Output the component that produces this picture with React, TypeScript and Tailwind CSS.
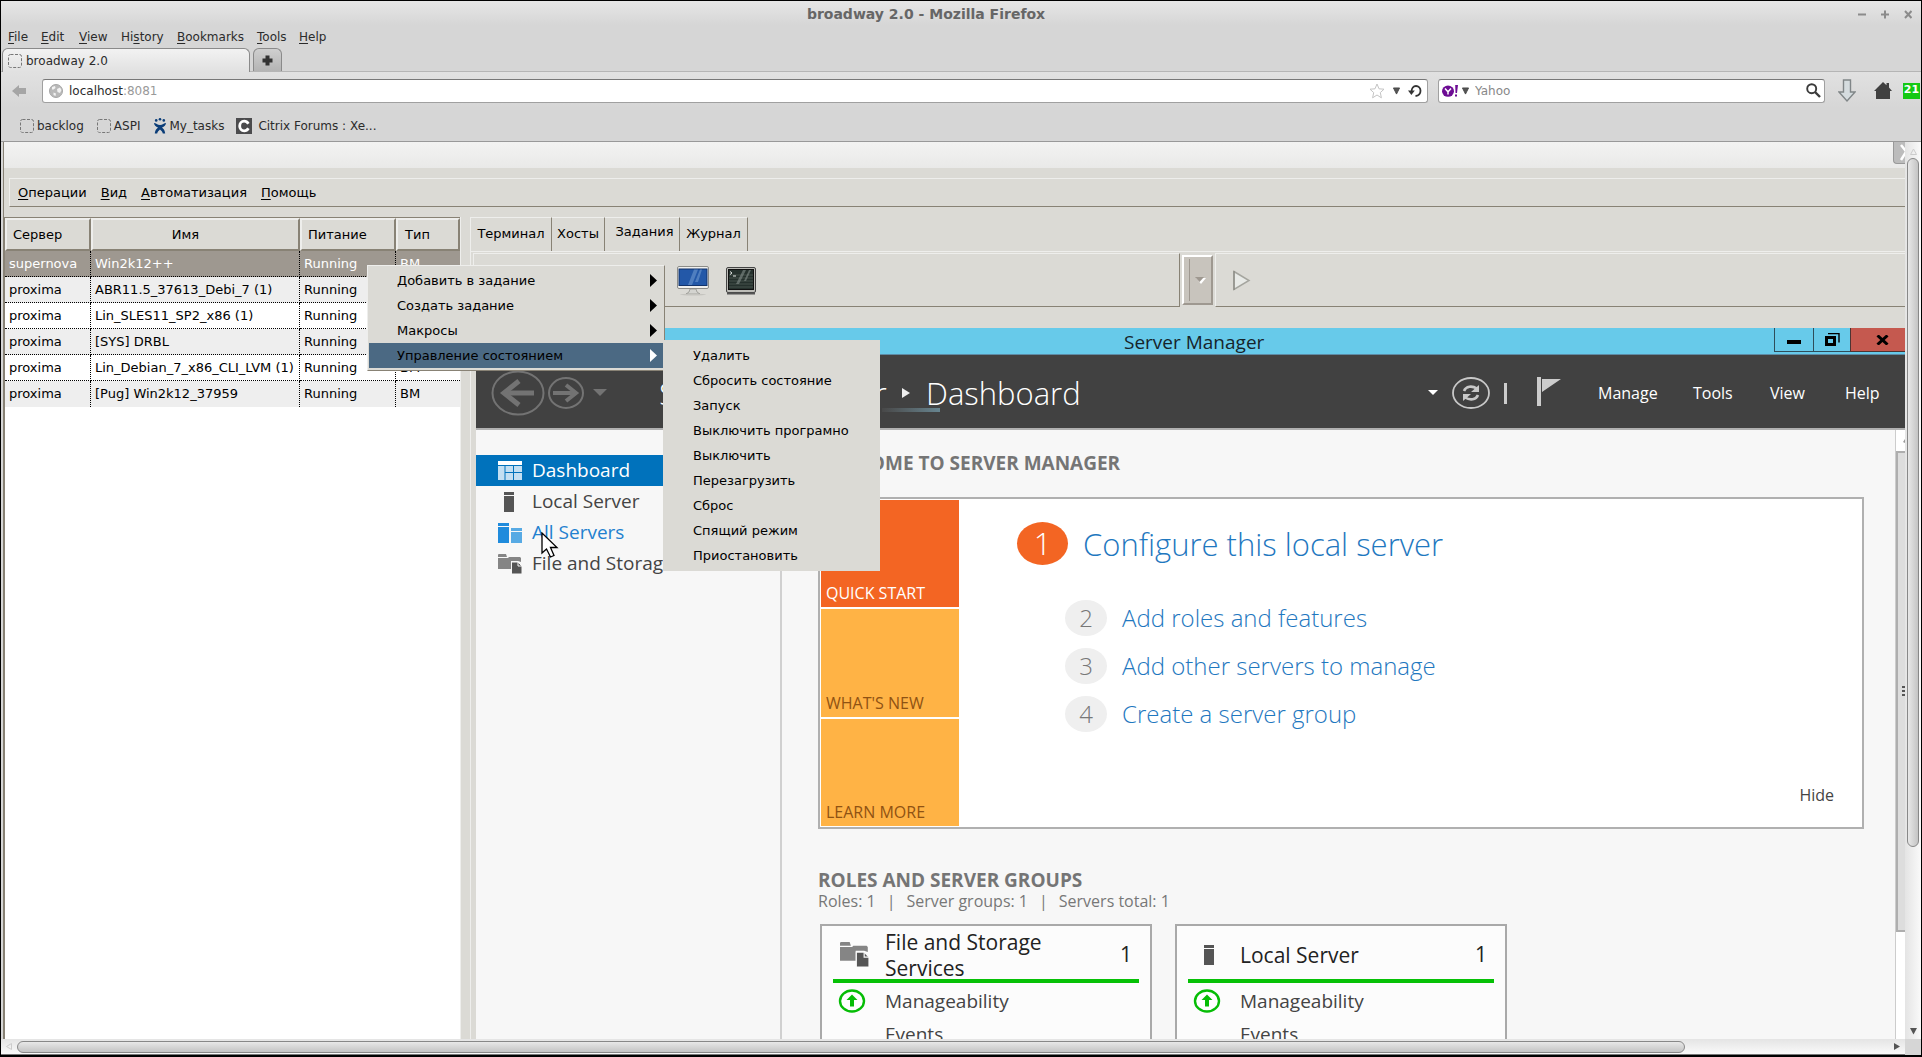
import type { ReactNode } from "react";

const gtkMenus = ["Операции", "Вид", "Автоматизация", "Помощь"];

const firefoxMenus: [string, string, string, string][] = [
  ["", "F", "ile", "w-[33px]"],
  ["", "E", "dit", "w-[38px]"],
  ["", "V", "iew", "w-[42px]"],
  ["Hi", "s", "tory", "w-[56px]"],
  ["", "B", "ookmarks", "w-[80px]"],
  ["", "T", "ools", "w-[42px]"],
  ["", "H", "elp", "w-[42px]"],
];

const machines = [
  ["supernova", "Win2k12++"],
  ["proxima", "ABR11.5_37613_Debi_7 (1)"],
  ["proxima", "Lin_SLES11_SP2_x86 (1)"],
  ["proxima", "[SYS] DRBL"],
  ["proxima", "Lin_Debian_7_x86_CLI_LVM (1)"],
  ["proxima", "[Pug] Win2k12_37959"],
];

const contextItems = ["Добавить в задание", "Создать задание", "Макросы", "Управление состоянием"];

const stateItems = [
  "Удалить",
  "Сбросить состояние",
  "Запуск",
  "Выключить програмно",
  "Выключить",
  "Перезагрузить",
  "Сброс",
  "Спящий режим",
  "Приостановить",
];

const steps: [number, string][] = [
  [2, "Add roles and features"],
  [3, "Add other servers to manage"],
  [4, "Create a server group"],
];

function BlankPageIcon() {
  return (
    <svg width="14" height="14" viewBox="0 0 14 14" aria-hidden="true">
      <rect x="0.5" y="0.5" width="13" height="13" rx="2" fill="none" stroke="#777" strokeDasharray="3 1.5" />
    </svg>
  );
}

function JiraIcon() {
  return (
    <svg width="14" height="16" viewBox="0 0 14 16" aria-hidden="true" fill="#0b3d78">
      <circle cx="3.2" cy="2.4" r="1.3" />
      <circle cx="7" cy="1.3" r="1.3" />
      <circle cx="10.8" cy="2.4" r="1.3" />
      <path d="M1 5C3 5 4.5 7 7 7S11 5 13 5C12.8 7.5 11.3 8.3 9 9.6C10.3 11 11.8 11.8 12.2 15.6H9.8C9.4 13.6 8.4 12.6 7 11.4C5.6 12.6 4.6 13.6 4.2 15.6H1.8C2.2 11.8 3.7 11 5 9.6C2.7 8.3 1.2 7.5 1 5Z" />
    </svg>
  );
}

function CitrixIcon() {
  return (
    <svg width="16" height="16" viewBox="0 0 16 16" aria-hidden="true">
      <rect width="16" height="16" fill="#4b4b4d" />
      <path d="M12.4 5.8C11.2 3.8 9.6 3.2 8.2 3.2C5.4 3.2 3.7 5.3 3.7 8S5.4 12.8 8.2 12.8C9.8 12.8 11.4 12 12.4 10.2" fill="none" stroke="#fff" strokeWidth="2.8" />
    </svg>
  );
}

function ServerIcon() {
  return (
    <svg width="24" height="20" viewBox="0 0 24 20" aria-hidden="true" fill="#555">
      <path d="M6 0H16V3H6ZM6 4H16V20H6Z" />
    </svg>
  );
}

function FilesIcon({ large }: { large?: boolean }) {
  return (
    <svg width={large ? 29 : 24} height={large ? 25 : 20} viewBox="0 0 24 20" preserveAspectRatio="none" aria-hidden="true">
      <path d="M0 1Q0 0 1 0H8L9 3H0ZM0 4H10L11 3H22L23 4V8L20 7H13V15H0Z" fill="#858585" />
      <path d="M13.5 8H20L24 12V20H13.5Z" fill="#555" stroke="#f7f7f7" />
      <path d="M20 8V12H24" fill="none" stroke="#f7f7f7" />
    </svg>
  );
}

function DashboardIcon() {
  return (
    <svg width="24" height="19" viewBox="0 0 24 19" aria-hidden="true">
      <rect width="24" height="4" fill="#fff" />
      <path d="M0 5H6.5V19H0ZM7.5 5H15V11H7.5ZM16 5H24V11H16ZM7.5 12H15V19H7.5ZM16 12H24V19H16Z" fill="#c3dff2" />
    </svg>
  );
}

function AllServersIcon() {
  return (
    <svg width="24" height="20" viewBox="0 0 24 20" aria-hidden="true">
      <path d="M0 0H11V3H0ZM0 4H11V20H0Z" fill="#1f8bdc" />
      <path d="M13 5H24V8H13ZM13 9H24V20H13Z" fill="#57aae4" />
    </svg>
  );
}

function UpIcon() {
  return (
    <svg width="28" height="24" viewBox="0 0 28 24" aria-hidden="true">
      <ellipse cx="14" cy="12" rx="12" ry="10.5" fill="#fff" stroke="#06bd06" strokeWidth="2.4" />
      <path d="M14 5.5L19.5 11H16V17.5H12V11H8.5Z" fill="#06bd06" />
    </svg>
  );
}

function MonitorIcon() {
  return (
    <svg width="32" height="30" viewBox="0 0 32 30" aria-hidden="true">
      <rect x="0.5" y="0.5" width="31" height="22" rx="1.5" fill="#f0f0ee" stroke="#8c8c88" />
      <rect x="2" y="3" width="28" height="16.5" fill="#2358a8" stroke="#12336b" />
      <path d="M17 3.5H21L15 19H11ZM23 3.5H25L21 16H18Z" fill="#6c97cf" opacity="0.6" />
      <path d="M13 23H19L20 26L23 28H9L12 26Z" fill="#d4d4d0" stroke="#8c8c88" strokeWidth="0.7" />
      <ellipse cx="16" cy="28.6" rx="13" ry="0.8" fill="#c5c4bf" />
    </svg>
  );
}

function TerminalIcon() {
  return (
    <svg width="30" height="28" viewBox="0 0 30 28" aria-hidden="true">
      <rect x="0.5" y="0.5" width="29" height="25" rx="1.5" fill="#bdbdb8" stroke="#444" />
      <rect x="2.5" y="2.5" width="25" height="20" fill="#25312d" stroke="#111" />
      <path d="M3 8H27M3 11H27M3 14H27M3 17H27M3 20H27" stroke="#46524d" />
      <path d="M17 3H20L13 17H10ZM23 3H25L20 14H18Z" fill="#8b9691" opacity="0.55" />
      <path d="M4 4.5L6 6L4 7.5M7 9H10" fill="none" stroke="#e4e8e6" />
      <path d="M1 26.5H29" stroke="#555" strokeWidth="2" />
    </svg>
  );
}

function SideItem({ icon, children, tone }: { icon: ReactNode; children: ReactNode; tone: string }) {
  return (
    <a href="#" className={`flex h-[31px] items-center gap-[10px] whitespace-nowrap pl-[22px] text-[19px] ${tone}`}>
      <span className="flex w-6 justify-center">{icon}</span>
      {children}
    </a>
  );
}

function RoleCard({ icon, title }: { icon: ReactNode; title: string }) {
  return (
    <section className="h-[140px] w-[332px] shrink-0 border-2 border-[#a9a9a9] bg-[#fcfcfc] px-[11px] text-[#222]">
      <div className="flex h-[57px] items-center border-b-4 border-[#06c106] pl-[7px] pr-[7px] pt-1">
        <span className="flex w-[29px] justify-center">{icon}</span>
        <h3 className="ml-4 w-[180px] text-[21px] leading-[26px]">{title}</h3>
        <span className="ml-auto text-[21px]">1</span>
      </div>
      <div className="flex h-9 items-center gap-[19px] pl-[5px] text-[19px] text-[#444]">
        <UpIcon />
        Manageability
      </div>
      <div className="pl-[52px] pt-[2px] text-[19px] leading-[27px] text-[#444]">Events</div>
    </section>
  );
}

function BrowserChrome() {
  return (
    <header className="shrink-0 bg-[#d6d6d6] text-[12px] text-[#2b2b2b]">
      <div className="grid h-6 grid-cols-[1fr_auto_1fr] items-end bg-linear-to-b from-[#e6e6e6] to-[#d6d6d6]">
        <span />
        <h1 className="mr-[70px] text-[14px] font-bold leading-[22px] text-[#666]">broadway 2.0 - Mozilla Firefox</h1>
        <div className="-ml-[70px] flex justify-end gap-[15px] pb-[6px] pr-[9px]">
          {["M0 4.5H8", "M0 4.5H8M4 0.5V8.5", "M1 1L7.5 8M7.5 1L1 8"].map((d, i) => (
            <button key={d} aria-label={["Minimize", "Maximize", "Close"][i]}>
              <svg width="8" height="9" viewBox="0 0 8 9">
                <path d={d} stroke="#8b8b8b" strokeWidth="2" />
              </svg>
            </button>
          ))}
        </div>
      </div>
      <nav className="flex h-[23px] items-center pl-[7px]">
        {firefoxMenus.map(([a, b, c, width]) => (
          <button key={b + c} className={`text-left ${width}`}>
            {a}
            <span className="underline underline-offset-2">{b}</span>
            {c}
          </button>
        ))}
      </nav>
      <div className="flex h-6 items-end gap-[3px] border-b border-[#b5b5b5] pl-px">
        <button className="-mb-px flex h-6 w-[248px] items-center gap-1 rounded-t-md border border-b-0 border-[#8a8a8a] bg-linear-to-b from-[#f2f2f2] to-[#e1e1e1] pl-[5px]">
          <BlankPageIcon />
          broadway 2.0
        </button>
        <button aria-label="New tab" className="flex h-[23px] w-[29px] items-center justify-center rounded-t-md border border-b-0 border-[#8a8a8a] bg-linear-to-b from-[#cfcfcf] to-[#b4b4b4]">
          <svg width="11" height="11" viewBox="0 0 11 11">
            <path d="M5.5 0.5V10.5M0.5 5.5H10.5" stroke="#333" strokeWidth="4" />
          </svg>
        </button>
      </div>
      <div className="flex h-9 items-center bg-linear-to-b from-[#e1e1e1] to-[#d6d6d6] pr-px pt-px">
        <button aria-label="Back" className="ml-[11px] mr-4">
          <svg width="14" height="12" viewBox="0 0 14 12">
            <path d="M0 6L7 0V3H14V9H7V12Z" fill="#a5a5a5" />
          </svg>
        </button>
        <div className="flex h-6 flex-1 items-center rounded-[3px] border border-[#a0a0a0] border-t-[#777] bg-white">
          <svg className="ml-[6px] mr-[6px]" width="14" height="14" viewBox="0 0 14 14" aria-hidden="true">
            <circle cx="7" cy="7" r="6.5" fill="#b9b9b9" stroke="#a6a6a6" />
            <path d="M3 3L6 2L6.5 4L4.5 5.5L3 5.5ZM8 5L11 3.5L12.5 6L11 9L8.5 8ZM4.5 8.5L7 9.5L6.5 12L4.5 11Z" fill="#f2f2f2" />
          </svg>
          <label className="relative flex h-full flex-1 items-center">
            <span aria-hidden="true">localhost</span>
            <span aria-hidden="true" className="text-[#999]">:8081</span>
            <input aria-label="Address" defaultValue="localhost:8081" className="absolute inset-0 bg-transparent text-transparent outline-none" />
          </label>
          <svg width="16" height="16" viewBox="0 0 16 16" aria-hidden="true">
            <path d="M8 1L10 5.8L15 6.2L11.3 9.6L12.4 14.8L8 12L3.6 14.8L4.7 9.6L1 6.2L6 5.8Z" fill="#fff" stroke="#c4c4c4" />
          </svg>
          <svg className="mx-2" width="7" height="8" viewBox="0 0 8 8" aria-hidden="true">
            <path d="M0.5 0.5H7.5L4 7.5Z" fill="#555" stroke="#444" />
          </svg>
          <button aria-label="Reload" className="mr-[5px]">
            <svg width="14" height="14" viewBox="0 0 14 14">
              <path d="M3.5 8C3.5 4 5.5 2 8 2S12.5 4 12.5 6.8S10.5 11.7 7.5 12" fill="none" stroke="#333" strokeWidth="1.8" />
              <path d="M0 6.5H6.8L3.4 11Z" fill="#333" />
            </svg>
          </button>
        </div>
        <div className="ml-[10px] flex h-6 w-[387px] items-center rounded-[3px] border border-[#a0a0a0] border-t-[#777] bg-white">
          <svg className="ml-[3px]" width="16" height="12" viewBox="0 0 16 12" aria-hidden="true">
            <ellipse cx="6" cy="6.2" rx="6" ry="5.6" fill="#6d0c94" />
            <path d="M3 3.5L6 6.8L9 3.5M6 6.5V9.5" fill="none" stroke="#fff" strokeWidth="1.5" />
            <path d="M13.2 0H16L15 8H13.5ZM13 9.5H15V11.5H13Z" fill="#6d0c94" />
          </svg>
          <svg className="ml-1 mr-[6px]" width="7" height="8" viewBox="0 0 8 8" aria-hidden="true">
            <path d="M0.5 0.5H7.5L4 7.5Z" fill="#555" stroke="#444" />
          </svg>
          <input aria-label="Search" placeholder="Yahoo" className="min-w-0 flex-1 outline-none placeholder:text-[#888]" />
          <button aria-label="Search Yahoo" className="mr-[3px]">
            <svg width="15" height="15" viewBox="0 0 15 15">
              <circle cx="5.7" cy="5.7" r="4.5" fill="none" stroke="#3b3b3b" strokeWidth="1.9" />
              <path d="M9 9L14 14" stroke="#3b3b3b" strokeWidth="2.4" />
            </svg>
          </button>
        </div>
        <button aria-label="Downloads" className="ml-[13px]">
          <svg width="18" height="24" viewBox="0 0 18 24">
            <path d="M5.5 1H12.5V13H17L9 22L1 13H5.5Z" fill="#d5dcdf" stroke="#808688" strokeWidth="1.4" />
          </svg>
        </button>
        <button aria-label="Home" className="ml-[18px]">
          <svg width="18" height="17" viewBox="0 0 18 17">
            <path d="M9 0L12.5 3.2V1H15V5.5L18 9H16V17H2V9H0Z" fill="#404040" />
          </svg>
        </button>
        <span className="ml-[11px] flex h-4 w-[17px] items-center justify-center overflow-hidden bg-[#14c914] text-[11px] font-bold text-white">21</span>
      </div>
      <nav className="flex h-[34px] items-center whitespace-nowrap border-b border-[#999] pl-[19px] pt-[2px]">
        <a href="#" className="mr-[13px] flex items-center gap-[3px]"><BlankPageIcon />backlog</a>
        <a href="#" className="mr-[13px] flex items-center gap-[3px]"><BlankPageIcon />ASPI</a>
        <a href="#" className="mr-[12px] flex items-center gap-[2px]"><JiraIcon />My_tasks</a>
        <a href="#" className="flex items-center gap-[6px]"><CitrixIcon />Citrix Forums : Xe...</a>
      </nav>
    </header>
  );
}

function MachineTable() {
  return (
    <div className="w-[456px] shrink-0 border-l border-t border-[#888275] bg-white">
      <table className="w-full table-fixed border-separate border-spacing-0">
        <colgroup>
          <col className="w-[86px]" />
          <col className="w-[209px]" />
          <col className="w-[96px]" />
          <col className="w-[64px]" />
        </colgroup>
        <thead>
          <tr className="h-[33px] bg-[#dbdad5]">
            {["Сервер", "Имя", "Питание", "Тип"].map((h) => (
              <th key={h} scope="col" className="border-2 border-b-[#888275] border-l-[#eeeeec] border-r-[#888275] border-t-[#eeeeec] p-0 text-left font-normal first:pl-[6px] nth-2:pr-5 nth-2:text-center nth-3:pl-[6px] nth-4:pl-[7px]">
                {h}
              </th>
            ))}
          </tr>
        </thead>
        <tbody>
          {machines.map(([server, name], i) => (
            <tr key={name} className={`h-[26px] ${i === 0 ? "bg-[#9e9890] text-white" : i % 2 ? "bg-[#eeeeee]" : "bg-white"}`}>
              {[server, name, "Running", "ВМ"].map((cell, c) => (
                <td
                  key={c}
                  className={`whitespace-nowrap border-dotted border-black p-0 pl-1 ${c < 3 ? "border-r" : ""} ${i < 5 ? "border-b" : ""}`}
                >
                  {cell}
                </td>
              ))}
            </tr>
          ))}
        </tbody>
      </table>
    </div>
  );
}

function Toolbar() {
  return (
    <div className="flex h-[54px] shrink-0 items-center gap-[2px] pl-[2px]">
      <div className="flex h-full w-[707px] items-center gap-[17px] border border-b-[#888275] border-l-[#eeeeec] border-r-[#888275] border-t-[#eeeeec] pl-[203px] pt-[2px]">
        <button aria-label="Screen"><MonitorIcon /></button>
        <button aria-label="Console"><TerminalIcon /></button>
      </div>
      <button aria-label="Options" className="flex h-[50px] w-[31px] items-center border-2 border-b-[#9e9890] border-l-white border-r-[#9e9890] border-t-white bg-[#c8c4bd] pl-[5px]">
        <span className="h-[42px] w-px bg-[#9e9890]" />
        <svg className="ml-1" width="12" height="8" viewBox="0 0 12 8">
          <path d="M2 2H12L7 8Z" fill="#fff" />
          <path d="M1 1H10L5.5 6Z" fill="#9e9890" />
        </svg>
      </button>
      <div className="flex h-full flex-1 items-center border border-r-0 border-b-[#888275] border-l-[#eeeeec] border-t-[#eeeeec] pl-4">
        <button aria-label="Run">
          <svg width="19" height="21" viewBox="0 0 19 21">
            <path d="M2 1.5L17 10.5L2 19.5Z" fill="#e8eae7" stroke="#a5a59f" strokeWidth="1.5" />
            <path d="M2 1V20" stroke="#80807a" />
          </svg>
        </button>
      </div>
    </div>
  );
}

function ServerManager() {
  return (
    <div className="ml-[5px] mt-[21px] flex min-h-0 flex-1 flex-col overflow-hidden bg-[#f7f7f7] font-['Open_Sans','Noto_Sans',sans-serif]">
      <div className="flex h-[27px] shrink-0 border-b border-[#5d8ba5] bg-[#67caea]">
        <h2 className="flex-1 pl-[648px] text-[19px] leading-7 text-[#16242a]">Server Manager</h2>
        <div className="flex h-6">
          <button aria-label="Minimize window" className="flex w-10 items-center justify-center border border-t-0 border-[#2e4d5a]">
            <svg width="14" height="8"><rect width="14" height="4" y="4" /></svg>
          </button>
          <button aria-label="Restore window" className="flex w-9 items-center justify-center border-b border-[#2e4d5a]">
            <svg width="15" height="13" viewBox="0 0 15 13" fill="none" stroke="#000">
              <rect x="1.5" y="4.5" width="8" height="7" strokeWidth="3" />
              <path d="M3 0.5H14V9.5" strokeWidth="1.4" />
            </svg>
          </button>
          <button aria-label="Close window" className="flex w-[55px] items-center justify-center border border-r-0 border-t-0 border-[#4e3432] bg-[#c5594f] pl-[9px]">
            <svg width="13" height="10" viewBox="0 0 13 10"><path d="M1.5 0.5L11.5 9.5M11.5 0.5L1.5 9.5" stroke="#000" strokeWidth="3" /></svg>
          </button>
        </div>
      </div>
      <div className="flex h-[75px] shrink-0 items-center border-b-2 border-[#b0b0b0] bg-[#414141] pt-[3px] text-white">
        <svg className="ml-[15px] shrink-0" width="94" height="46" viewBox="0 0 94 46" fill="none" stroke="#737373" aria-hidden="true">
          <ellipse cx="27" cy="23" rx="25.5" ry="21.5" strokeWidth="2" />
          <path d="M13 23H43" strokeWidth="5" />
          <path d="M28 11L13 23L28 35" strokeWidth="5" />
          <ellipse cx="75" cy="23" rx="17" ry="15" strokeWidth="2" />
          <path d="M62 23H84" strokeWidth="4" />
          <path d="M75 15L85 23L75 31" strokeWidth="4" />
        </svg>
        <svg className="ml-2" width="14" height="8" aria-hidden="true"><path d="M0 0H14L7 7Z" fill="#737373" /></svg>
        <div className="ml-[52px] flex flex-1 items-center whitespace-nowrap text-[31px] font-light">
          <span className="w-[243px] text-[32px]">Server Manager</span>
          <span className="relative">
            <svg width="8" height="10" aria-hidden="true"><path d="M0 0L8 5L0 10Z" fill="#eee" /></svg>
            <span className="absolute -left-5 top-5 h-1 w-[58px] bg-linear-to-r from-[#484848] to-[#678590]" />
          </span>
          <span className="relative ml-4">Dashboard</span>
        </div>
        <svg width="10" height="6" aria-hidden="true"><path d="M0 0H10L5 5Z" fill="#fff" /></svg>
        <button aria-label="Refresh" className="ml-[14px]">
          <svg width="38" height="32" viewBox="0 0 38 32" fill="none" stroke="#c8c8c8">
            <ellipse cx="19" cy="16" rx="18" ry="15" strokeWidth="1.8" />
            <path d="M12 14C14 9 20 8.5 25 11.5M26 18C24 23 18 23.5 13 20.5" strokeWidth="2.6" />
            <path d="M27 8V15H19ZM11 24V17H19Z" fill="#c8c8c8" stroke="none" />
          </svg>
        </button>
        <span className="ml-[14px] h-[21px] w-[3px] bg-[#ccc]" />
        <svg className="mb-1 ml-[30px]" width="24" height="29" viewBox="0 0 24 29" aria-hidden="true">
          <path d="M0 0H4V29H0ZM5 2H24L5 15Z" fill="#ccc" />
        </svg>
        <nav className="ml-[37px] flex text-[16px]">
          <button className="w-[95px] text-left">Manage</button>
          <button className="w-[77px] text-left">Tools</button>
          <button className="w-[75px] text-left">View</button>
          <button className="w-[60px] text-left">Help</button>
        </nav>
      </div>
      <div className="flex min-h-0 flex-1">
        <aside className="w-[306px] shrink-0 border-r-2 border-[#d0d0d0] pt-[25px]">
          <SideItem icon={<DashboardIcon />} tone="bg-[#0072bc] text-white">Dashboard</SideItem>
          <SideItem icon={<ServerIcon />} tone="text-[#444]">Local Server</SideItem>
          <SideItem icon={<AllServersIcon />} tone="text-[#2280cf]">All Servers</SideItem>
          <SideItem icon={<FilesIcon />} tone="text-[#444]">File and Storage Services</SideItem>
        </aside>
        <main className="min-w-0 flex-1 overflow-hidden pl-9 pr-[31px]">
          <h2 className="mt-5 text-[19px] font-bold leading-[26px] text-[#757575]">WELCOME TO SERVER MANAGER</h2>
          <section className="mt-[21px] flex h-[332px] border-2 border-[#b0b0b0] bg-white p-px">
            <nav className="flex w-[138px] shrink-0 flex-col gap-[2px] text-[16px] leading-6">
              <button className="flex flex-1 items-end bg-[#f36523] pb-[2px] pl-[5px] text-white">QUICK START</button>
              <button className="flex flex-1 items-end bg-[#ffb345] pb-[2px] pl-[5px] text-[#8f5213]">WHAT'S NEW</button>
              <button className="flex flex-1 items-end bg-[#ffb345] pb-[2px] pl-[5px] text-[#8f5213]">LEARN MORE</button>
            </nav>
            <div className="flex-1 pl-[58px] pt-[22px] text-[#1f78c0]">
              <a href="#" className="flex h-[43px] items-center gap-[15px] text-[31px] font-light">
                <span className="flex h-[43px] w-[51px] items-center justify-center rounded-[50%] bg-[#f36523] text-white">1</span>
                <span className="pt-[2px]">Configure this local server</span>
              </a>
              <div className="mt-[29px]">
                {steps.map(([n, label]) => (
                  <a href="#" key={n} className="flex h-12 items-center gap-[15px] pl-12 text-[24px] font-light">
                    <span className="flex h-9 w-[42px] items-center justify-center rounded-[50%] bg-[#efefef] text-[#777]">{n}</span>
                    {label}
                  </a>
                ))}
              </div>
              <button className="ml-auto mr-[27px] mt-[45px] block text-[16px] leading-6 text-[#444]">Hide</button>
            </div>
          </section>
          <h2 className="mt-[38px] text-[19px] font-bold leading-[26px] text-[#757575]">ROLES AND SERVER GROUPS</h2>
          <p className="flex gap-[11px] text-[16px] leading-[17px] text-[#777]">
            <span>Roles: 1</span><span>|</span><span>Server groups: 1</span><span>|</span><span>Servers total: 1</span>
          </p>
          <div className="ml-[2px] mt-[14px] flex gap-[23px]">
            <RoleCard icon={<FilesIcon large />} title="File and Storage Services" />
            <RoleCard icon={<ServerIcon />} title="Local Server" />
          </div>
        </main>
        <div className="flex w-[10px] shrink-0 flex-col border-l border-[#ccc] bg-white">
          <div className="flex h-[21px] items-center justify-end">
            <svg width="2" height="4" aria-hidden="true"><path d="M0 3L2 0V4Z" fill="#999" /></svg>
          </div>
          <div className="flex h-[481px] items-center justify-end border-2 border-r-0 border-[#aeaeae] bg-[#ddd]">
            <svg width="3" height="12" aria-hidden="true"><path d="M0 1H3M0 5H3M0 9H3" stroke="#555" strokeWidth="2" /></svg>
          </div>
        </div>
      </div>
    </div>
  );
}

function ContextMenus() {
  return (
    <>
      <ul role="menu" className="absolute left-[366px] top-[264px] w-[298px] border border-b-[#888275] border-l-[#eeeeec] border-r-[#888275] border-t-[#eeeeec] bg-[#dbdad5] px-px py-[2px]">
        {contextItems.map((item, i) => (
          <li key={item} role="none">
            <button role="menuitem" className={`flex h-[25px] w-full items-center justify-between pl-7 pr-[6px] text-black ${i === 3 ? "bg-[#4b6983]" : ""}`}>
              {item}
              <svg width="7" height="13" aria-hidden="true"><path d="M0 0L7 6.5L0 13Z" fill={i === 3 ? "#fff" : "#000"} /></svg>
            </button>
          </li>
        ))}
      </ul>
      <ul role="menu" className="absolute left-[662px] top-[339px] w-[217px] bg-[#dbdad5] py-[3px]">
        {stateItems.map((item) => (
          <li key={item} role="none">
            <button role="menuitem" className="flex h-[25px] w-full items-center pl-[30px] text-black">{item}</button>
          </li>
        ))}
      </ul>
      <svg className="absolute left-[540px] top-[531px]" width="18" height="26" viewBox="0 0 18 26" aria-hidden="true">
        <path d="M1 1V21L5.5 17L9.5 25L13 23.5L9.5 15.5H16Z" fill="#fff" stroke="#000" strokeWidth="1.3" />
      </svg>
    </>
  );
}

export default function App() {
  return (
    <div className="relative flex h-screen w-full flex-col overflow-hidden border border-b-2 border-black bg-[#d6d6d6] font-['DejaVu_Sans',sans-serif] text-[13px] text-black">
      <BrowserChrome />
      <div className="flex min-h-0 flex-1">
        <div className="ml-[2px] flex min-w-0 flex-1 flex-col border-l border-[#888275] bg-[#dbdad5]">
          <div className="flex h-[26px] shrink-0 justify-end bg-linear-to-b from-[#f3f3f2] to-[#e9e9e8]">
            <button aria-label="Close view" className="h-[22px] w-3 overflow-hidden rounded-bl border border-r-0 border-t-0 border-[#999] bg-[#bcbcbc]">
              <svg width="11" height="18" viewBox="0 0 11 18"><path d="M7 1L11 6L17 1M7 16L12 8" stroke="#fff" strokeWidth="2.5" fill="none" /></svg>
            </button>
          </div>
          <nav className="ml-[5px] mt-[10px] flex h-[29px] shrink-0 items-center gap-[14px] border border-r-0 border-b-[#888275] border-l-[#eeeeec] border-t-[#eeeeec] pl-2">
            {gtkMenus.map((item) => (
              <button key={item}>
                <span className="underline underline-offset-2">{item[0]}</span>
                {item.slice(1)}
              </button>
            ))}
          </nav>
          <div className="mt-[10px] flex min-h-0 flex-1">
            <MachineTable />
            <div className="w-[10px] shrink-0 border-l border-[#eeeeec]" />
            <div className="flex min-w-0 flex-1 flex-col border-l border-[#eeeeec]">
              <div role="tablist" className="flex h-[35px] shrink-0 border-b border-[#eeeeec]">
                <button role="tab" className="w-[81px] border-r border-t border-r-[#888275] border-t-[#eeeeec] pb-[2px]">Терминал</button>
                <button role="tab" className="w-[53px] border-r border-t border-r-[#888275] border-t-[#eeeeec] pb-[2px]">Хосты</button>
                <button role="tab" aria-selected="true" className="w-[75px] border-r border-t border-r-[#888275] border-t-[#eeeeec] pb-[6px] pl-[5px]">Задания</button>
                <button role="tab" className="w-[68px] border-r border-t border-r-[#888275] border-t-[#eeeeec] pb-[2px]">Журнал</button>
              </div>
              <div className="h-px shrink-0" />
              <Toolbar />
              <ServerManager />
            </div>
          </div>
        </div>
        <div className="flex w-4 shrink-0 flex-col items-center bg-linear-to-r from-[#e4e4e4] to-[#fafafa]">
          <svg className="mt-[6px]" width="7" height="7" aria-hidden="true"><path d="M0.5 6.5H6.5L3.5 1Z" fill="none" stroke="#ccc" /></svg>
          <div className="mt-[3px] h-[689px] w-3 rounded-full border border-[#888] bg-linear-to-r from-[#e8e8e8] to-[#c4c4c4]" />
          <svg className="mb-1 mt-auto" width="7" height="7" aria-hidden="true"><path d="M0 0H7L3.5 6.5Z" fill="#555" /></svg>
        </div>
      </div>
      <div className="flex h-4 shrink-0 items-center border-b border-[#777] bg-linear-to-b from-[#e4e4e4] to-[#fafafa]">
        <svg className="ml-[5px]" width="6" height="7" aria-hidden="true"><path d="M5.5 0.5V6.5L0.5 3.5Z" fill="none" stroke="#ccc" /></svg>
        <div className="ml-[5px] h-3 flex-1 rounded-full border border-[#888] bg-linear-to-b from-[#e8e8e8] to-[#c4c4c4]" />
        <svg className="ml-[209px]" width="6" height="7" aria-hidden="true"><path d="M0 0V7L6 3.5Z" fill="#555" /></svg>
        <div className="ml-[5px] h-4 w-4 bg-[#d6d6d6]" />
      </div>
      <ContextMenus />
    </div>
  );
}
